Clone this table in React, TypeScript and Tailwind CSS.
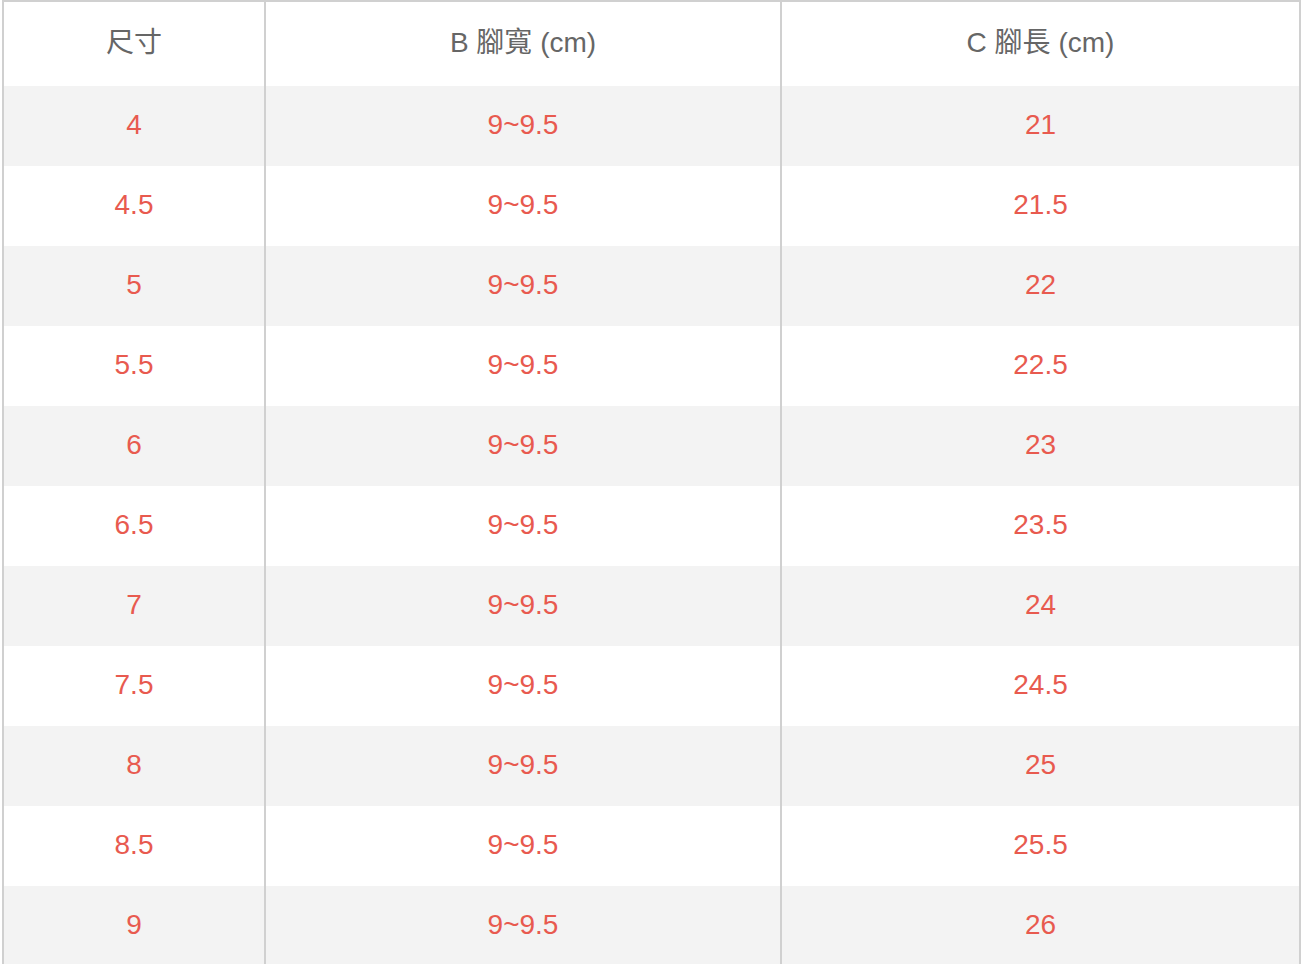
import React from "react";

const rows: [string, string, string][] = [
  ["4", "9~9.5", "21"],
  ["4.5", "9~9.5", "21.5"],
  ["5", "9~9.5", "22"],
  ["5.5", "9~9.5", "22.5"],
  ["6", "9~9.5", "23"],
  ["6.5", "9~9.5", "23.5"],
  ["7", "9~9.5", "24"],
  ["7.5", "9~9.5", "24.5"],
  ["8", "9~9.5", "25"],
  ["8.5", "9~9.5", "25.5"],
  ["9", "9~9.5", "26"],
];

const font = {
  fontFamily: '"Liberation Sans", "Noto Sans CJK TC", sans-serif',
};

export default function App() {
  return (
    <div className="bg-white w-[1304px] h-[964px] overflow-hidden" style={font}>
      <div className="ml-[2px] w-[1299px] border-2 border-b-0 border-[#d0d0d0]">
        <div className="flex h-[84px] text-[28px] text-[#666666]">
          <div className="w-[262px] pb-[2px] flex items-center justify-center border-r-2 border-[#d0d0d0]">尺寸</div>
          <div className="w-[516px] pb-[2px] flex items-center justify-center border-r-2 border-[#d0d0d0]">B 腳寬 (cm)</div>
          <div className="flex-1 pb-[2px] flex items-center justify-center">C 腳長 (cm)</div>
        </div>
        {rows.map((r, i) => (
          <div
            key={i}
            className={`flex h-[80px] text-[28px] text-[#e85a4f] ${i % 2 === 0 ? "bg-[#f3f3f3]" : "bg-white"}`}
          >
            <div className="w-[262px] pb-[2px] flex items-center justify-center border-r-2 border-[#d0d0d0]">{r[0]}</div>
            <div className="w-[516px] pb-[2px] flex items-center justify-center border-r-2 border-[#d0d0d0]">{r[1]}</div>
            <div className="flex-1 pb-[2px] flex items-center justify-center">{r[2]}</div>
          </div>
        ))}
      </div>
    </div>
  );
}
